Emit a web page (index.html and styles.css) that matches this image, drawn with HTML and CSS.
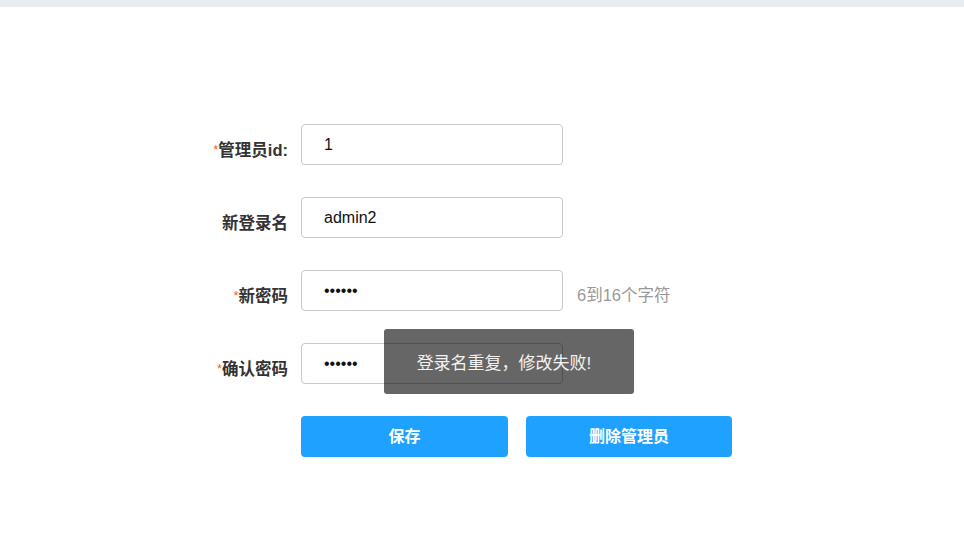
FILE: index.html
```html
<!DOCTYPE html>
<html lang="zh-CN">
<head>
<meta charset="utf-8">
<title>修改管理员</title>
<link rel="stylesheet" href="styles.css">
</head>
<body>
<div class="topbar"></div>
<form class="form">
  <label class="label"><span class="req">*</span>管理员id:</label>
  <input class="input" type="text" value="1">
  <span></span>

  <label class="label">新登录名</label>
  <input class="input" type="text" value="admin2">
  <span></span>

  <label class="label"><span class="req">*</span>新密码</label>
  <input class="input" type="password" value="123456">
  <span class="hint">6到16个字符</span>

  <label class="label"><span class="req">*</span>确认密码</label>
  <input class="input" type="password" value="123456">
  <span></span>

  <span></span>
  <div class="actions">
    <button type="button" class="btn">保存</button>
    <button type="button" class="btn btn-wide">删除管理员</button>
  </div>
</form>
<div class="toast">登录名重复，修改失败!</div>
</body>
</html>
```
FILE: styles.css
```css
html, body {
  margin: 0;
  padding: 0;
  background: #fff;
  font-family: "Liberation Sans", Arial, "Noto Sans CJK SC", sans-serif;
}
.topbar {
  height: 7px;
  background: #e9edf0;
}
.form {
  display: grid;
  grid-template-columns: 288px 262px auto;
  grid-auto-rows: 41px;
  column-gap: 13px;
  row-gap: 32px;
  padding-top: 117px;
}
.label {
  text-align: right;
  font-size: 16.5px;
  font-weight: bold;
  color: #333;
  line-height: 22px;
  padding-top: 15px;
  font-family: "Liberation Sans", "Noto Sans CJK SC", sans-serif;
}
.req {
  color: #ff5a2b;
  font-weight: normal;
  font-size: 13px;
  vertical-align: 2px;
}
.input {
  box-sizing: border-box;
  width: 262px;
  height: 41px;
  border: 1px solid #c9c9c9;
  border-radius: 4px;
  padding: 0 0 0 22px;
  font-size: 16px;
  color: #111;
  font-family: "Liberation Sans", Arial, sans-serif;
  outline: none;
  margin: 0;
}
.hint {
  font-size: 16.5px;
  color: #999;
  line-height: 22px;
  padding-top: 14px;
  margin-left: 1px;
  font-family: "Liberation Sans", "Noto Sans CJK SC", sans-serif;
}
.actions {
  grid-column: 2 / span 2;
  display: flex;
  gap: 18px;
}
.btn {
  width: 207px;
  height: 41px;
  border: none;
  border-radius: 4px;
  background: #1fa1ff;
  color: #fff;
  font-size: 16px;
  font-weight: bold;
  font-family: "Liberation Sans", "Noto Sans CJK SC", sans-serif;
  padding: 0 0 3px 0;
  margin: 0;
}
.btn-wide {
  width: 206px;
}
.toast {
  position: absolute;
  left: 384px;
  top: 329px;
  width: 250px;
  height: 65px;
  box-sizing: border-box;
  padding-right: 10px;
  background: rgba(0, 0, 0, 0.6);
  border-radius: 3px;
  color: #f2f2f2;
  font-size: 17px;
  display: flex;
  align-items: center;
  justify-content: center;
  font-family: "Liberation Sans", "Noto Sans CJK SC", sans-serif;
}
```
